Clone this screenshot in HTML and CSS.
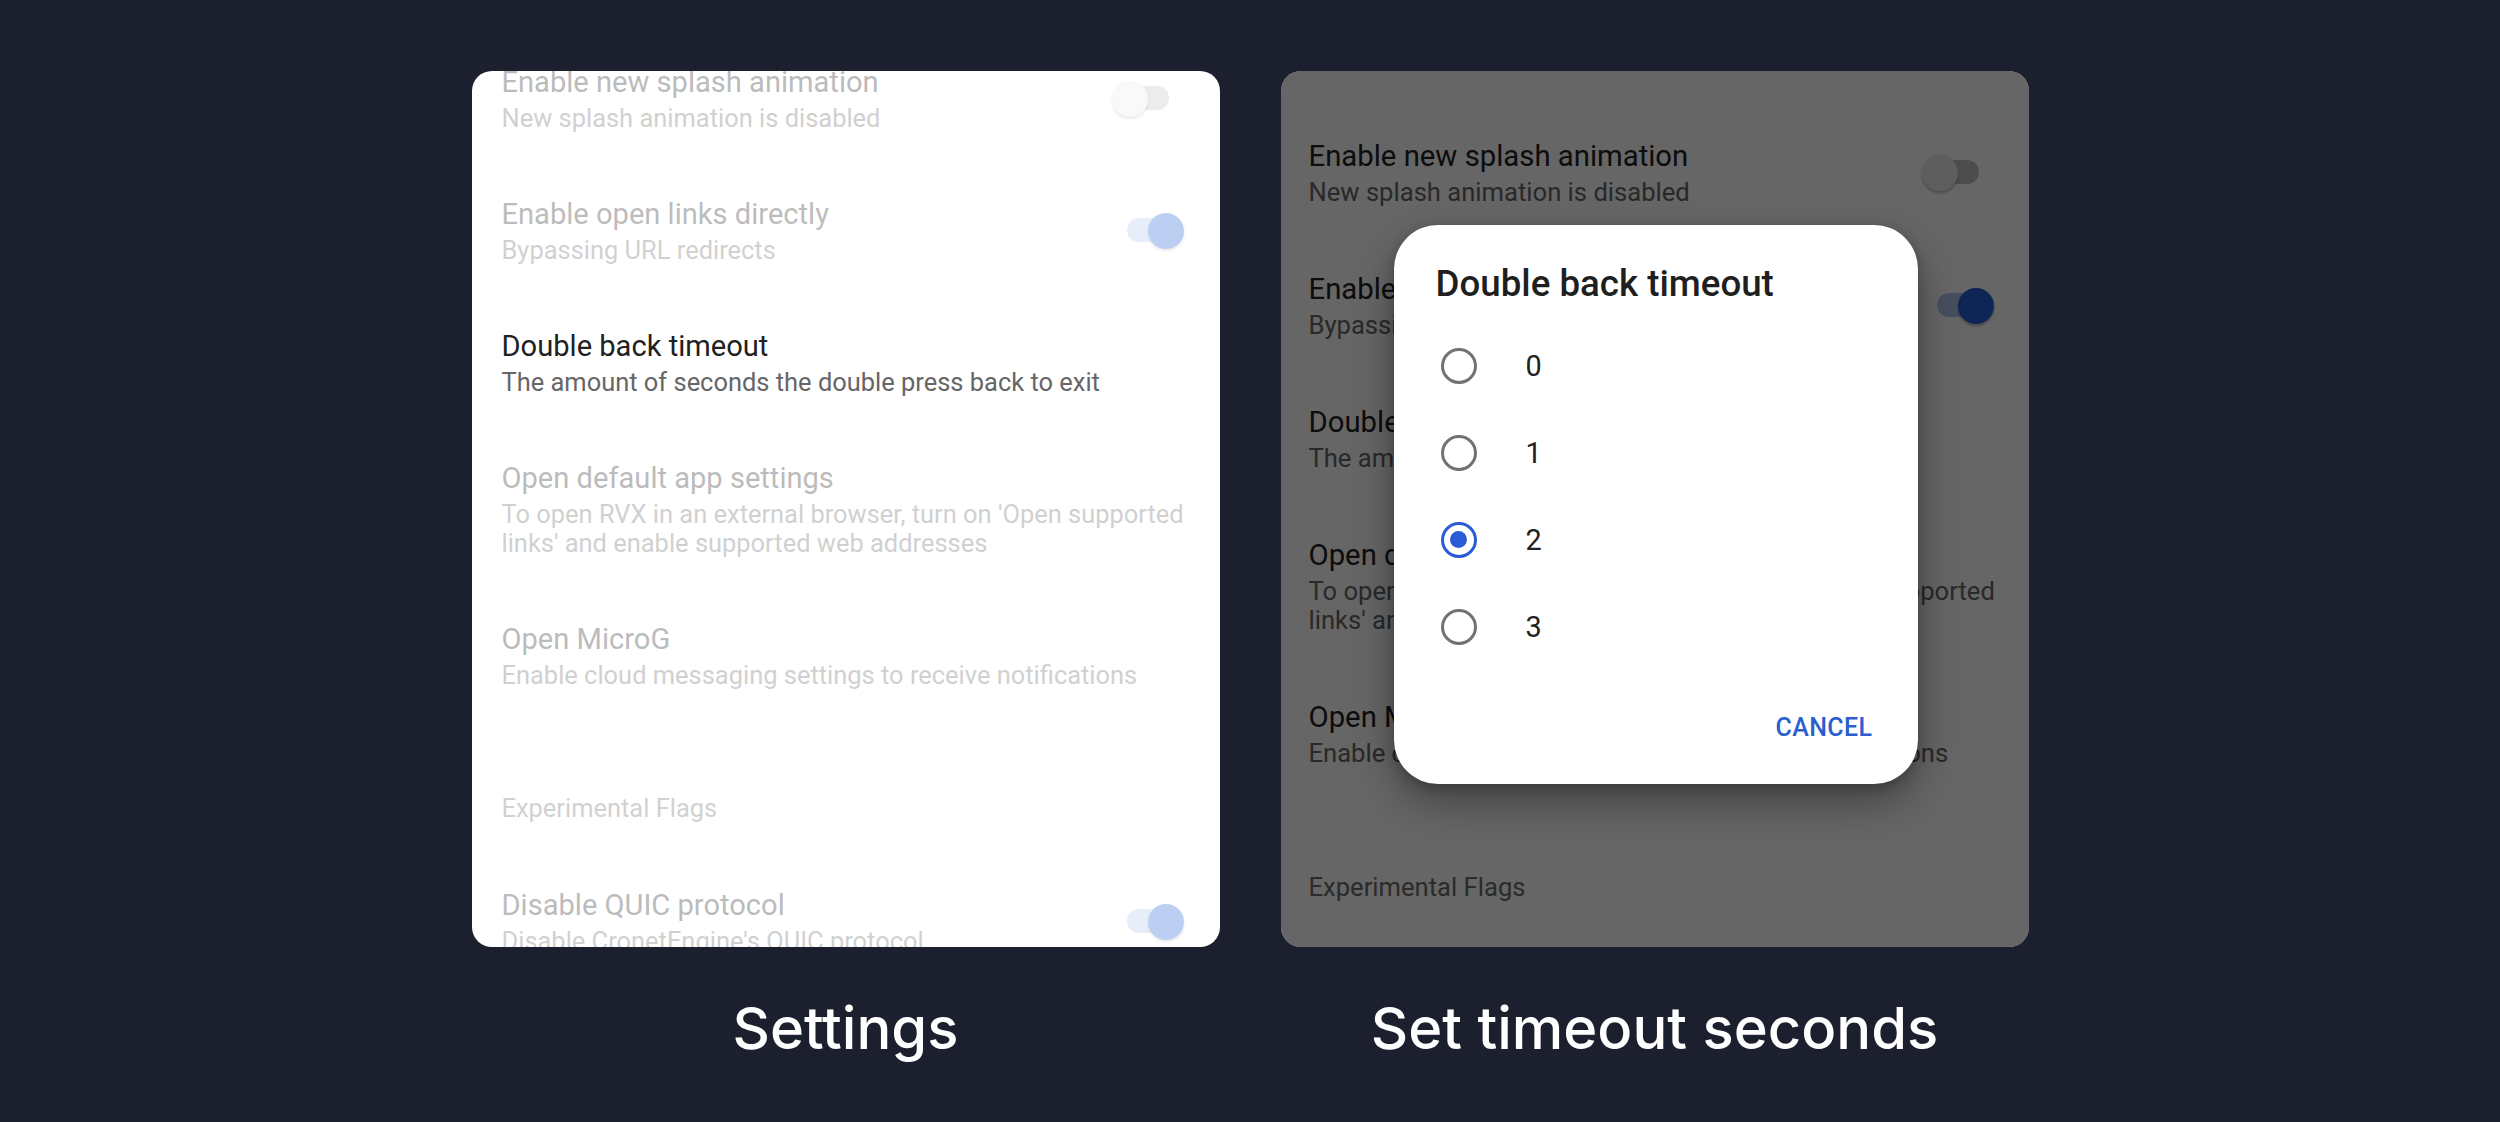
FILE: index.html
```html
<!DOCTYPE html>
<html lang="en">
<head>
<meta charset="utf-8">
<title>Settings – Double back timeout</title>
<link rel="stylesheet" href="styles.css">
</head>
<body>
<main class="showcase">
  <section class="shot">
    <div class="panel">
      <div class="list list--left">
        <div class="pref pref--dim">
          <div class="pref-text">
            <div class="pref-title">Enable new splash animation</div>
            <div class="pref-summary">New splash animation is disabled</div>
          </div>
          <span class="switch"><span class="switch-track"></span><span class="switch-thumb"></span></span>
        </div>
        <div class="pref pref--dim">
          <div class="pref-text">
            <div class="pref-title">Enable open links directly</div>
            <div class="pref-summary">Bypassing URL redirects</div>
          </div>
          <span class="switch switch--on"><span class="switch-track"></span><span class="switch-thumb"></span></span>
        </div>
        <div class="pref">
          <div class="pref-text">
            <div class="pref-title">Double back timeout</div>
            <div class="pref-summary">The amount of seconds the double press back to exit</div>
          </div>
        </div>
        <div class="pref pref--dim">
          <div class="pref-text">
            <div class="pref-title">Open default app settings</div>
            <div class="pref-summary pref-summary--fixed">To open RVX in an external browser, turn on 'Open supported<br>links' and enable supported web addresses</div>
          </div>
        </div>
        <div class="pref pref--dim">
          <div class="pref-text">
            <div class="pref-title">Open MicroG</div>
            <div class="pref-summary">Enable cloud messaging settings to receive notifications</div>
          </div>
        </div>
        <div class="category pref--dim">Experimental Flags</div>
        <div class="pref pref--dim">
          <div class="pref-text">
            <div class="pref-title">Disable QUIC protocol</div>
            <div class="pref-summary">Disable CronetEngine's QUIC protocol</div>
          </div>
          <span class="switch switch--on"><span class="switch-track"></span><span class="switch-thumb"></span></span>
        </div>
      </div>
    </div>
    <h2 class="caption">Settings</h2>
  </section>

  <section class="shot">
    <div class="panel panel--modal">
      <div class="list list--right">
        <div class="pref">
          <div class="pref-text">
            <div class="pref-title">Enable new splash animation</div>
            <div class="pref-summary">New splash animation is disabled</div>
          </div>
          <span class="switch"><span class="switch-track"></span><span class="switch-thumb"></span></span>
        </div>
        <div class="pref">
          <div class="pref-text">
            <div class="pref-title">Enable open links directly</div>
            <div class="pref-summary">Bypassing URL redirects</div>
          </div>
          <span class="switch switch--on"><span class="switch-track"></span><span class="switch-thumb"></span></span>
        </div>
        <div class="pref">
          <div class="pref-text">
            <div class="pref-title">Double back timeout</div>
            <div class="pref-summary">The amount of seconds the double press back to exit</div>
          </div>
        </div>
        <div class="pref">
          <div class="pref-text">
            <div class="pref-title">Open default app settings</div>
            <div class="pref-summary pref-summary--fixed">To open RVX in an external browser, turn on 'Open supported<br>links' and enable supported web addresses</div>
          </div>
        </div>
        <div class="pref">
          <div class="pref-text">
            <div class="pref-title">Open MicroG</div>
            <div class="pref-summary">Enable cloud messaging settings to receive notifications</div>
          </div>
        </div>
        <div class="category">Experimental Flags</div>
        <div class="pref">
          <div class="pref-text">
            <div class="pref-title">Disable QUIC protocol</div>
            <div class="pref-summary">Disable CronetEngine's QUIC protocol</div>
          </div>
          <span class="switch switch--on"><span class="switch-track"></span><span class="switch-thumb"></span></span>
        </div>
      </div>
      <div class="scrim"></div>
      <div class="dialog">
        <div class="dialog-title">Double back timeout</div>
        <div class="radio-list">
          <div class="radio-row"><span class="radio"></span><span class="radio-label">0</span></div>
          <div class="radio-row"><span class="radio"></span><span class="radio-label">1</span></div>
          <div class="radio-row"><span class="radio radio--checked"></span><span class="radio-label">2</span></div>
          <div class="radio-row"><span class="radio"></span><span class="radio-label">3</span></div>
        </div>
        <div class="dialog-actions"><span class="dialog-button">CANCEL</span></div>
      </div>
    </div>
    <h2 class="caption">Set timeout seconds</h2>
  </section>
</main>
</body>
</html>
```

FILE: styles.css
```css
* {
  box-sizing: border-box;
}

html, body {
  margin: 0;
  padding: 0;
}

body {
  background: #1b1f2e;
  min-height: 100vh;
  font-family: Roboto, "Liberation Sans", sans-serif;
}

.showcase {
  display: flex;
  justify-content: center;
  gap: 61px;
  padding-top: 71px;
}

.shot {
  display: flex;
  flex-direction: column;
  align-items: center;
}

.panel {
  position: relative;
  width: 748px;
  height: 876px;
  background: #ffffff;
  border-radius: 20px;
  overflow: hidden;
}

.list {
  display: flex;
  flex-direction: column;
}

.list--left {
  margin-top: -38px;
}

.list--right {
  margin-top: 36px;
}

.pref {
  display: flex;
  align-items: center;
  padding: 32px 36px 32px 30px;
}

.list--right .pref {
  padding: 32px 35px 33px 28px;
}

.pref-text {
  flex: 1;
  min-width: 0;
}

.pref-title {
  font-size: 29.1px;
  line-height: 34px;
  color: #212121;
  white-space: nowrap;
}

.pref-summary {
  margin-top: 5px;
  font-size: 25.45px;
  line-height: 29px;
  color: #666666;
}

.list--right .pref-title {
  font-size: 29.3px;
}

.list--right .pref-summary {
  font-size: 25.6px;
}

.pref-summary--fixed {
  white-space: nowrap;
}

.pref--dim {
  opacity: 0.3;
}

.category {
  padding: 72px 30px 33px;
  font-size: 25.45px;
  line-height: 29px;
  color: #6b6b6b;
}

.list--right .category {
  padding-left: 28px;
  font-size: 25.6px;
}

/* Switch */
.switch {
  position: relative;
  flex: none;
  width: 72px;
  height: 36px;
}

.switch-track {
  position: absolute;
  left: 15px;
  top: 5px;
  width: 42px;
  height: 24px;
  border-radius: 12px;
  background: #c0c0c0;
}

.switch-thumb {
  position: absolute;
  left: 0;
  top: 0;
  width: 36px;
  height: 36px;
  border-radius: 50%;
  background: #ebebeb;
  box-shadow: 0 2px 3px rgba(0, 0, 0, 0.28);
}

.switch--on .switch-track {
  background: #b2c6eb;
}

.switch--on .switch-thumb {
  left: 36px;
  background: #2360d6;
}

/* Modal */
.scrim {
  position: absolute;
  inset: 0;
  background: rgba(0, 0, 0, 0.6);
}

.dialog {
  position: absolute;
  left: 113px;
  top: 154px;
  width: 524px;
  display: flex;
  flex-direction: column;
  padding: 38px 45px 41px 42px;
  background: #ffffff;
  border-radius: 44px;
  box-shadow: 0 18px 40px rgba(0, 0, 0, 0.35), 0 4px 12px rgba(0, 0, 0, 0.2);
}

.dialog-title {
  font-size: 36.7px;
  line-height: 42px;
  font-weight: 500;
  color: #1f1f1f;
}

.radio-list {
  display: flex;
  flex-direction: column;
  margin-top: 17px;
}

.radio-row {
  display: flex;
  align-items: center;
  height: 87px;
  padding-left: 5px;
  gap: 49px;
}

.radio {
  flex: none;
  width: 36px;
  height: 36px;
  border-radius: 50%;
  border: 3.6px solid #727272;
  display: flex;
  align-items: center;
  justify-content: center;
}

.radio--checked {
  border-color: #2a5bd7;
}

.radio--checked::after {
  content: "";
  width: 17px;
  height: 17px;
  border-radius: 50%;
  background: #2a5bd7;
}

.radio-label {
  font-size: 28.8px;
  line-height: 34px;
  color: #212121;
}

.dialog-actions {
  display: flex;
  justify-content: flex-end;
  margin-top: 43px;
}

.dialog-button {
  font-size: 25px;
  line-height: 30px;
  font-weight: 500;
  letter-spacing: 0.4px;
  color: #2b5ecf;
}

/* Captions */
.caption {
  margin: 46px 0 0;
  font-family: Inter, "Noto Sans", sans-serif;
  font-size: 58px;
  line-height: 70px;
  font-weight: 500;
  color: #ffffff;
}
```
